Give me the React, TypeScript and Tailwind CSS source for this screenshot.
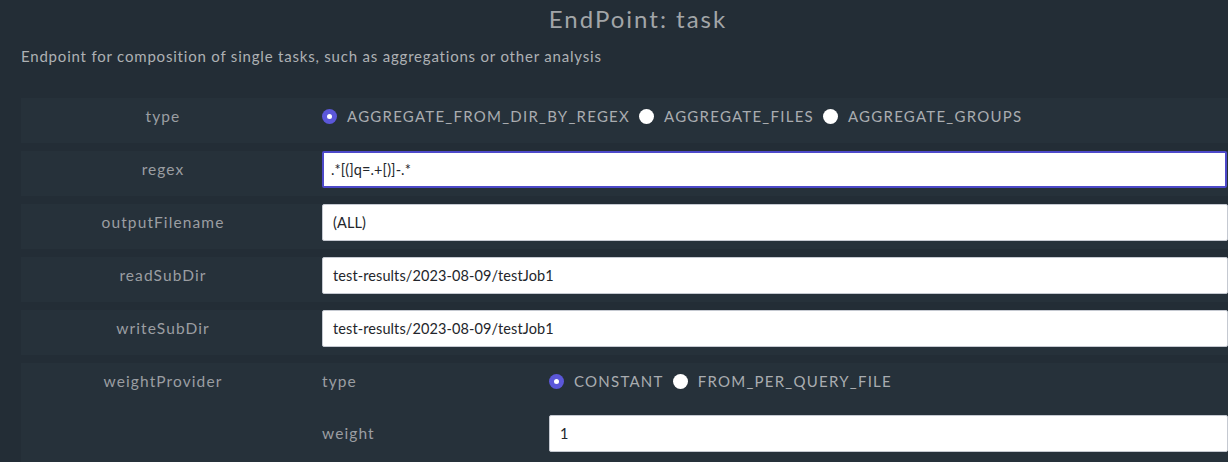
const font = { fontFamily: 'Lato, "Noto Sans", sans-serif' }

function Radio({ checked, label }: { checked?: boolean; label: string }) {
  return (
    <label className="flex items-center">
      {checked ? (
        <span className="flex h-[15px] w-[15px] items-center justify-center rounded-full bg-[#5b57d9]">
          <span className="h-[5px] w-[5px] rounded-full bg-white" />
        </span>
      ) : (
        <span className="h-[15px] w-[15px] rounded-full bg-white" />
      )}
      <span className="ml-[10px] mr-[9px] text-[15px] tracking-[1.25px] text-[#a9acb0]">{label}</span>
    </label>
  )
}

function TextInput({ value, focused }: { value: string; focused?: boolean }) {
  return (
    <div
      className={
        focused
          ? 'flex h-[37px] items-center rounded-[2px] border-2 border-[#4d49c9] bg-white pl-[7px] text-[14.5px] tracking-[0.1px] text-[#23262b]'
          : 'flex h-[37px] items-center rounded-[2px] border border-[#c5c9d1] bg-white pl-[10px] text-[14.5px] tracking-[0.1px] text-[#23262b]'
      }
    >
      {value}
    </div>
  )
}

function Row({ label, children, tall }: { label: string; children: React.ReactNode; tall?: boolean }) {
  return (
    <div className={`grid grid-cols-[284px_1fr] gap-x-[17px] bg-[#26313a] pb-[8px] ${tall ? 'min-h-[110px]' : ''}`}>
      <div className="flex h-[37px] items-center justify-center text-[15.5px] tracking-[1.1px] text-[#9b9ea2]">{label}</div>
      <div className="min-w-0">{children}</div>
    </div>
  )
}

export default function App() {
  return (
    <div className="h-[462px] w-[1228px] overflow-hidden bg-[#232d36]" style={font}>
      <h1 className="pl-[48px] pt-[4px] text-center text-[24px] leading-[30px] tracking-[2px] text-[#a2a5a8]">EndPoint: task</h1>
      <p className="mt-[12px] pl-[21px] text-[15px] leading-[20px] tracking-[0.8px] text-[#aeb1b4]">
        Endpoint for composition of single tasks, such as aggregations or other analysis
      </p>
      <div className="ml-[21px] mt-[32px] flex flex-col gap-[8px]">
        <Row label="type">
          <div className="flex h-[37px] items-center">
            <Radio checked label="AGGREGATE_FROM_DIR_BY_REGEX" />
            <Radio label="AGGREGATE_FILES" />
            <Radio label="AGGREGATE_GROUPS" />
          </div>
        </Row>
        <Row label="regex">
          <div className="pr-px">
            <TextInput focused value=".*[(]q=.+[)]-.*" />
          </div>
        </Row>
        <Row label="outputFilename">
          <TextInput value="(ALL)" />
        </Row>
        <Row label="readSubDir">
          <TextInput value="test-results/2023-08-09/testJob1" />
        </Row>
        <Row label="writeSubDir">
          <TextInput value="test-results/2023-08-09/testJob1" />
        </Row>
        <Row label="weightProvider" tall>
          <div className="flex flex-col gap-[15px]">
            <div className="grid grid-cols-[227px_1fr]">
              <div className="flex h-[37px] items-center text-[15.5px] tracking-[1.1px] text-[#9b9ea2]">type</div>
              <div className="flex h-[37px] items-center">
                <Radio checked label="CONSTANT" />
                <Radio label="FROM_PER_QUERY_FILE" />
              </div>
            </div>
            <div className="grid grid-cols-[227px_1fr]">
              <div className="flex h-[37px] items-center text-[15.5px] tracking-[1.1px] text-[#9b9ea2]">weight</div>
              <TextInput value="1" />
            </div>
          </div>
        </Row>
      </div>
    </div>
  )
}
